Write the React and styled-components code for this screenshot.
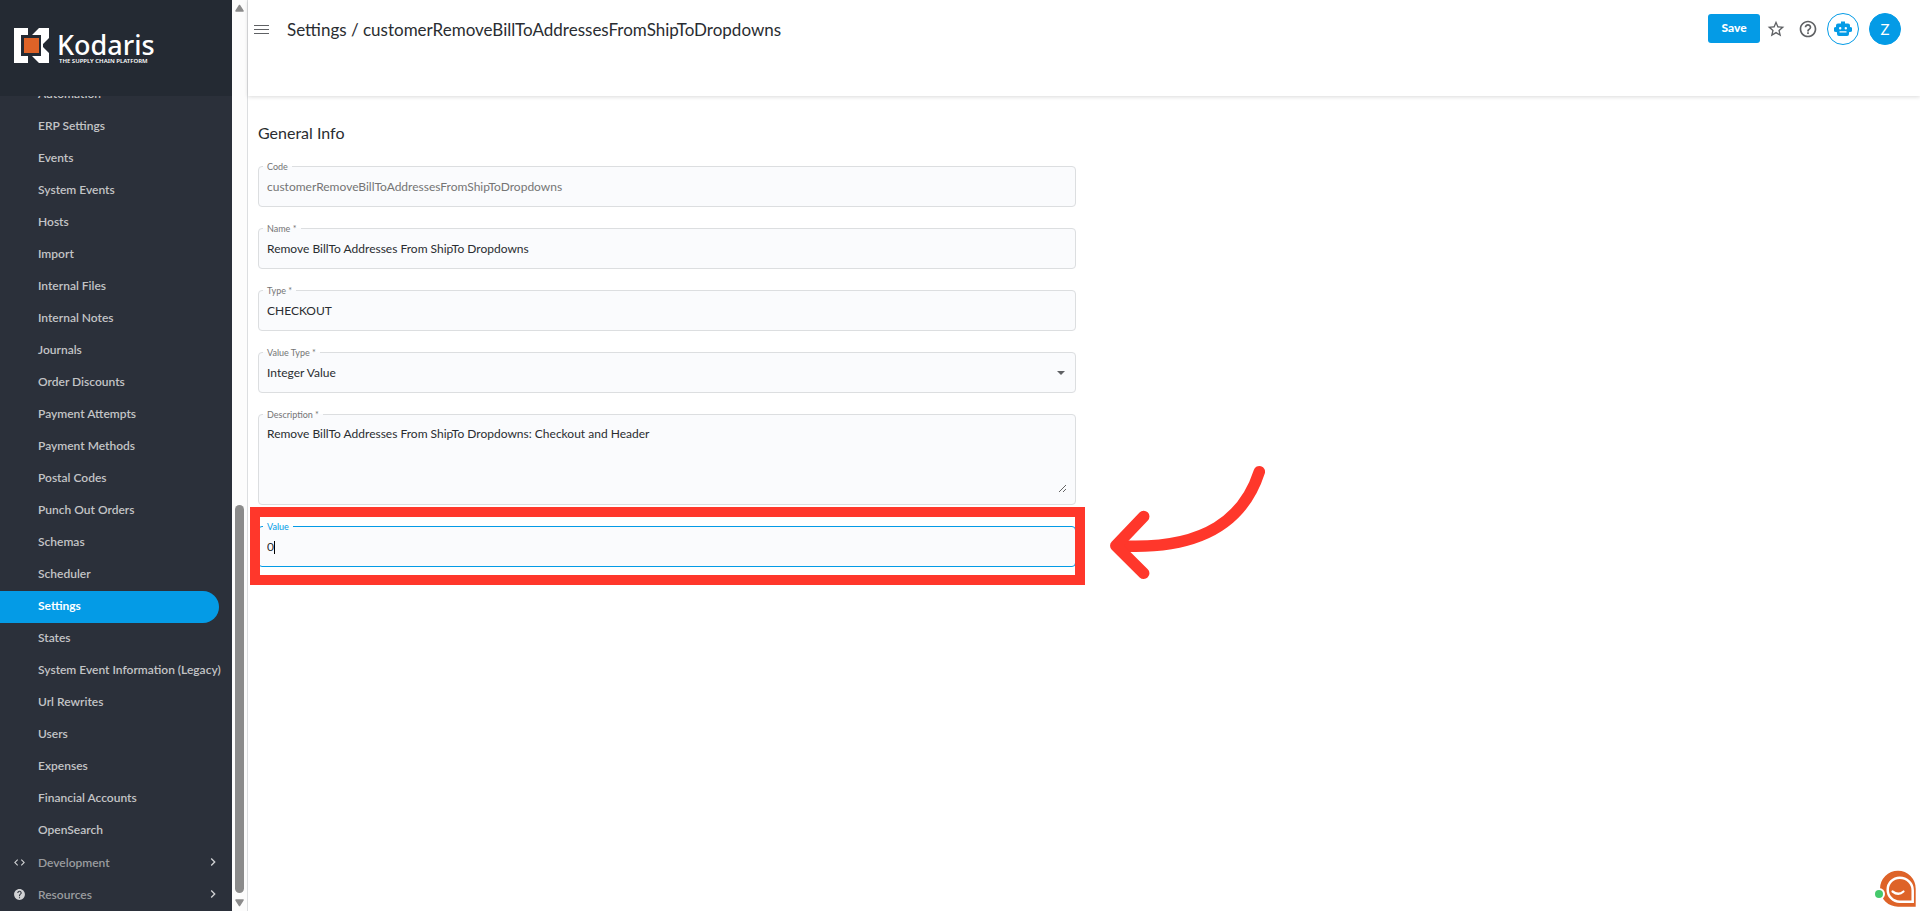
import React, { useState } from 'react';
import styled, { createGlobalStyle, ThemeProvider } from 'styled-components';
import { MdCode, MdHelp, MdHelpOutline, MdStarBorder, MdChevronRight } from 'react-icons/md';

const theme = {
  primary: '#049be6',
  sidebar: '#2b303a',
  sidebarHeader: '#242a33',
  text: '#2a2d31',
  muted: '#757575',
  border: '#dcdee0',
  field: '#fafbfd',
  scroll: '#8b8b8b',
  highlight: '#ff372b',
};

const GlobalStyle = createGlobalStyle`
  * {
    box-sizing: border-box;
  }

  body {
    margin: 0;
    font-family: Lato, "Liberation Sans", sans-serif;
    color: ${(props) => props.theme.text};
    background-color: #fff;
  }

  button, input, select, textarea {
    font-family: inherit;
    color: inherit;
  }
`;

const Page = styled.div`
  display: flex;
  height: 100vh;
  overflow: hidden;
`;

const Sidebar = styled.aside`
  display: flex;
  flex-direction: column;
  flex: none;
  width: 232px;
  background-color: ${(props) => props.theme.sidebar};
`;

const Brand = styled.div`
  display: flex;
  align-items: flex-start;
  flex: none;
  gap: 8px;
  height: 96px;
  padding: 28px 14px 0;
  background-color: ${(props) => props.theme.sidebarHeader};
`;

const BrandText = styled.div`
  display: flex;
  flex-direction: column;
  padding-top: 4px;
  color: #fff;
  font-family: "Noto Sans", sans-serif;
  white-space: nowrap;
`;

const BrandName = styled.span`
  font-size: 27px;
  font-weight: 500;
  line-height: 26px;
`;

const Tagline = styled.span`
  padding-left: 2px;
  font-size: 6px;
  font-weight: 600;
  line-height: 6px;
`;

const Nav = styled.nav`
  display: flex;
  flex-direction: column;
  flex: 1;
  justify-content: flex-end;
  min-height: 0;
  overflow: hidden;
`;

const NavLink = styled.a`
  display: flex;
  flex: none;
  align-items: center;
  height: 32px;
  margin-right: 13px;
  padding: 0 0 3px 38px;
  border-radius: 0 16px 16px 0;
  background-color: ${(props) => (props.$active ? props.theme.primary : 'transparent')};
  color: ${(props) => (props.$active ? '#fff' : '#c3c4c6')};
  font-size: 12px;
  font-weight: ${(props) => (props.$active ? 700 : 600)};
  text-decoration: none;
  white-space: nowrap;
`;

const NavGroup = styled.button`
  display: grid;
  grid-template-columns: 25px 1fr 14px;
  flex: none;
  align-items: center;
  height: 32px;
  padding: 0 13px 2px;
  border: none;
  background: none;
  color: #9a9c9f;
  font-size: 12px;
  font-weight: 600;
  text-align: left;
  cursor: pointer;

  svg {
    color: #d0d1d3;
  }
`;

const ScrollTrack = styled.div`
  display: flex;
  flex-direction: column;
  flex: none;
  align-items: center;
  width: 16px;
  padding: 4px 3px;
  border-right: 1px solid ${(props) => props.theme.border};
  background-color: #fcfcfc;
`;

const ScrollGap = styled.div`
  flex: 492;
`;

const ScrollThumb = styled.div`
  flex: 387;
  width: 9px;
  margin-bottom: 6px;
  border-radius: 5px;
  background-color: ${(props) => props.theme.scroll};
`;

const Main = styled.main`
  flex: 1;
  min-width: 0;
`;

const Header = styled.header`
  display: flex;
  align-items: flex-start;
  height: 96px;
  padding: 13px 19px 0 6px;
  box-shadow: 0 1px 4px rgba(0, 0, 0, 0.15);
`;

const MenuButton = styled.button`
  display: flex;
  align-items: center;
  height: 32px;
  padding: 0;
  border: none;
  background: none;
  cursor: pointer;
`;

const Title = styled.h1`
  flex: 1;
  margin: 0 0 0 18px;
  font-size: 17px;
  font-weight: 400;
  line-height: 34px;
`;

const Actions = styled.div`
  display: flex;
  align-items: flex-start;
`;

const SaveButton = styled.button`
  width: 52px;
  height: 29px;
  margin-top: 1px;
  padding: 0 0 2px;
  border: none;
  border-radius: 3px;
  background-color: ${(props) => props.theme.primary};
  color: #fff;
  font-size: 12px;
  font-weight: 900;
  cursor: pointer;
`;

const IconButton = styled.button`
  display: flex;
  align-items: center;
  justify-content: center;
  width: 32px;
  height: 32px;
  padding: 0;
  border: none;
  background: none;
  color: #5f6164;
  cursor: pointer;
`;

const RoundButtons = styled.div`
  display: flex;
  gap: 10px;
  padding-left: 3px;
`;

const RoundButton = styled.button`
  display: flex;
  align-items: center;
  justify-content: center;
  width: 32px;
  height: 32px;
  padding: 0;
  border: 1px solid ${(props) => props.theme.primary};
  border-radius: 50%;
  background-color: ${(props) => (props.$filled ? props.theme.primary : '#fff')};
  color: ${(props) => (props.$filled ? '#fff' : props.theme.primary)};
  font-size: 15px;
  cursor: pointer;
`;

const Content = styled.form`
  padding: 26px 10px;
`;

const SectionTitle = styled.h2`
  margin: 0 0 17px;
  font-size: 16px;
  font-weight: 400;
  line-height: 22px;
`;

const FieldList = styled.div`
  display: flex;
  flex-direction: column;
  gap: 16px;
  width: calc(50% - 8px);
`;

const FieldRow = styled.div`
  position: relative;
`;

const Outline = styled.fieldset`
  min-width: 0;
  margin: 0;
  padding: 0 8px 0 4px;
  border: 1px solid ${(props) => (props.$focused ? props.theme.primary : props.theme.border)};
  border-radius: 4px;
  background-color: ${(props) => props.theme.field};
  color: ${(props) => (props.$focused ? props.theme.primary : props.theme.muted)};
`;

const Legend = styled.legend`
  padding: 0 4px;
  font-size: 9px;
  line-height: 11px;
`;

const Control = styled.input`
  display: block;
  width: 100%;
  height: 34px;
  padding: 0 4px 5px;
  border: none;
  outline: none;
  background: none;
  color: ${(props) => (props.disabled ? props.theme.muted : props.theme.text)};
  font-size: 12px;
  caret-color: transparent;
`;

const SelectControl = styled(Control)`
  appearance: none;
  cursor: pointer;
`;

const TextControl = styled(Control)`
  height: 73px;
  margin-bottom: 11px;
  padding: 6px 4px;
  line-height: 16px;
  resize: vertical;
`;

const SelectArrow = styled.svg`
  position: absolute;
  top: 24px;
  right: 11px;
  pointer-events: none;
`;

const Caret = styled.span`
  position: absolute;
  top: 20px;
  left: 16px;
  width: 1px;
  height: 13px;
  background-color: #000;
  pointer-events: none;
`;

const Highlight = styled.div`
  position: absolute;
  inset: -14px -9px -18px -8px;
  border: 10px solid ${(props) => props.theme.highlight};
  pointer-events: none;
`;

const Pointer = styled.svg`
  position: absolute;
  top: -57px;
  left: calc(100% + 34px);
  pointer-events: none;
`;

const ChatButton = styled.button`
  position: fixed;
  right: 0;
  bottom: 0;
  padding: 0;
  border: none;
  background: none;
  cursor: pointer;

  svg {
    display: block;
  }
`;

const links = [
  'Automation',
  'ERP Settings',
  'Events',
  'System Events',
  'Hosts',
  'Import',
  'Internal Files',
  'Internal Notes',
  'Journals',
  'Order Discounts',
  'Payment Attempts',
  'Payment Methods',
  'Postal Codes',
  'Punch Out Orders',
  'Schemas',
  'Scheduler',
  'Settings',
  'States',
  'System Event Information (Legacy)',
  'Url Rewrites',
  'Users',
  'Expenses',
  'Financial Accounts',
  'OpenSearch',
];

const LogoMark = () => (
  <svg width="35" height="35" viewBox="0 0 35 35">
    <path d="M0 0h14v7H7v21h7v7H0z" fill="#fff" />
    <path d="M25 0h10v10l-6 6v3l6 6v10H25l-7-7h9V7h-9z" fill="#fff" />
    <rect x="10" y="10" width="15" height="15" fill="#de6328" />
  </svg>
);

const RobotIcon = () => (
  <svg width="18" height="16" viewBox="0 0 18 16" fill="currentColor">
    <path
      fillRule="evenodd"
      d="M7 0.5h4v2h3a2 2 0 0 1 2 2V6a2 2 0 0 1 0 5l-1 .3V13a2 2 0 0 1-2 2H5a2 2 0 0 1-2-2v-1.700L2 11a2 2 0 0 1 0-5V4.500a2 2 0 0 1 2-2h3zM6.200 6a1.200 1.200 0 1 0 0 2.400 1.200 1.200 0 0 0 0-2.400zM11.800 6a1.200 1.200 0 1 0 0 2.400 1.200 1.200 0 0 0 0-2.400zM5.500 10.200v1.300h7v-1.300z"
    />
  </svg>
);

const Field = ({ id, label, focused, children }) => (
  <FieldRow>
    <Outline $focused={focused}>
      <Legend>
        <label htmlFor={id}>{label}</label>
      </Legend>
      {children}
    </Outline>
    {id === 'valueType' && (
      <SelectArrow width="8" height="4" viewBox="0 0 8 4">
        <path d="M0 0h8L4 4z" fill="#5f6164" />
      </SelectArrow>
    )}
    {focused && (
      <>
        <Caret />
        <Highlight />
        <Pointer width="160" height="120" viewBox="0 0 160 120" fill="none" stroke="#ff372b" strokeWidth="11.500" strokeLinecap="round" strokeLinejoin="round">
          <path d="M149.300 7.700C135 52 98 87 8 81.700" />
          <path d="M33.700 52.500L5.800 81.700l27.900 27.600" />
        </Pointer>
      </>
    )}
  </FieldRow>
);

const App = () => {
  const [form, setForm] = useState({
    code: 'customerRemoveBillToAddressesFromShipToDropdowns',
    name: 'Remove BillTo Addresses From ShipTo Dropdowns',
    type: 'CHECKOUT',
    valueType: 'Integer Value',
    description: 'Remove BillTo Addresses From ShipTo Dropdowns: Checkout and Header',
    value: '0',
  });

  const bind = (id) => ({
    id,
    value: form[id],
    onChange: (e) => setForm({ ...form, [id]: e.target.value }),
  });

  return (
    <ThemeProvider theme={theme}>
      <GlobalStyle />
      <Page>
        <Sidebar>
          <Brand>
            <LogoMark />
            <BrandText>
              <BrandName>Kodaris</BrandName>
              <Tagline>THE SUPPLY CHAIN PLATFORM</Tagline>
            </BrandText>
          </Brand>
          <Nav>
            {links.map((link) => (
              <NavLink key={link} href="#" $active={link === 'Settings'}>
                {link}
              </NavLink>
            ))}
            <NavGroup type="button">
              <MdCode size={13} />
              Development
              <MdChevronRight size={16} />
            </NavGroup>
            <NavGroup type="button">
              <MdHelp size={13} />
              Resources
              <MdChevronRight size={16} />
            </NavGroup>
          </Nav>
        </Sidebar>
        <ScrollTrack>
          <svg width="9" height="8" viewBox="0 0 9 8">
            <path d="M4.500 1.500L8 7H1z" fill="#8b8b8b" stroke="#8b8b8b" strokeWidth="1.500" strokeLinejoin="round" />
          </svg>
          <ScrollGap />
          <ScrollThumb />
          <svg width="9" height="8" viewBox="0 0 9 8">
            <path d="M4.500 6.500L8 1H1z" fill="#8b8b8b" stroke="#8b8b8b" strokeWidth="1.500" strokeLinejoin="round" />
          </svg>
        </ScrollTrack>
        <Main>
          <Header>
            <MenuButton type="button" aria-label="Menu">
              <svg width="15" height="10" viewBox="0 0 15 10">
                <path d="M0 1.500h15M0 5.500h15M0 9.500h15" stroke="#5f6164" />
              </svg>
            </MenuButton>
            <Title>Settings / customerRemoveBillToAddressesFromShipToDropdowns</Title>
            <Actions>
              <SaveButton type="submit" form="setting">Save</SaveButton>
              <IconButton type="button" aria-label="Favorite">
                <MdStarBorder size={20} />
              </IconButton>
              <IconButton type="button" aria-label="Help">
                <MdHelpOutline size={20} />
              </IconButton>
              <RoundButtons>
                <RoundButton type="button" aria-label="Assistant">
                  <RobotIcon />
                </RoundButton>
                <RoundButton type="button" $filled>Z</RoundButton>
              </RoundButtons>
            </Actions>
          </Header>
          <Content id="setting" onSubmit={(e) => e.preventDefault()}>
            <SectionTitle>General Info</SectionTitle>
            <FieldList>
              <Field id="code" label="Code">
                <Control {...bind('code')} disabled />
              </Field>
              <Field id="name" label="Name *">
                <Control {...bind('name')} />
              </Field>
              <Field id="type" label="Type *">
                <Control {...bind('type')} />
              </Field>
              <Field id="valueType" label="Value Type *">
                <SelectControl as="select" {...bind('valueType')}>
                  <option>Integer Value</option>
                </SelectControl>
              </Field>
              <Field id="description" label="Description *">
                <TextControl as="textarea" {...bind('description')} />
              </Field>
              <Field id="value" label="Value" focused>
                <Control {...bind('value')} autoFocus />
              </Field>
            </FieldList>
          </Content>
        </Main>
      </Page>
      <ChatButton type="button" aria-label="Chat">
        <svg width="60" height="51" viewBox="0 0 60 51">
          <path d="M38 10.700a17.700 18 0 0 1 17.700 18v18H38a18 18 0 0 1 0-36z" fill="#de6328" />
          <path d="M39.700 17.700a13 12.500 0 0 1 13 12.500v11.500h-13a12 12 0 1 1 0-24z" fill="#de6328" stroke="#fff" strokeWidth="2.500" />
          <path d="M32.500 31.500q6 4.500 11 0" fill="none" stroke="#fff" strokeWidth="2.200" strokeLinecap="round" />
          <circle cx="19" cy="34" r="6" fill="#fff" />
          <circle cx="19" cy="34" r="4" fill="#45c96c" />
        </svg>
      </ChatButton>
    </ThemeProvider>
  );
};

export default App;
